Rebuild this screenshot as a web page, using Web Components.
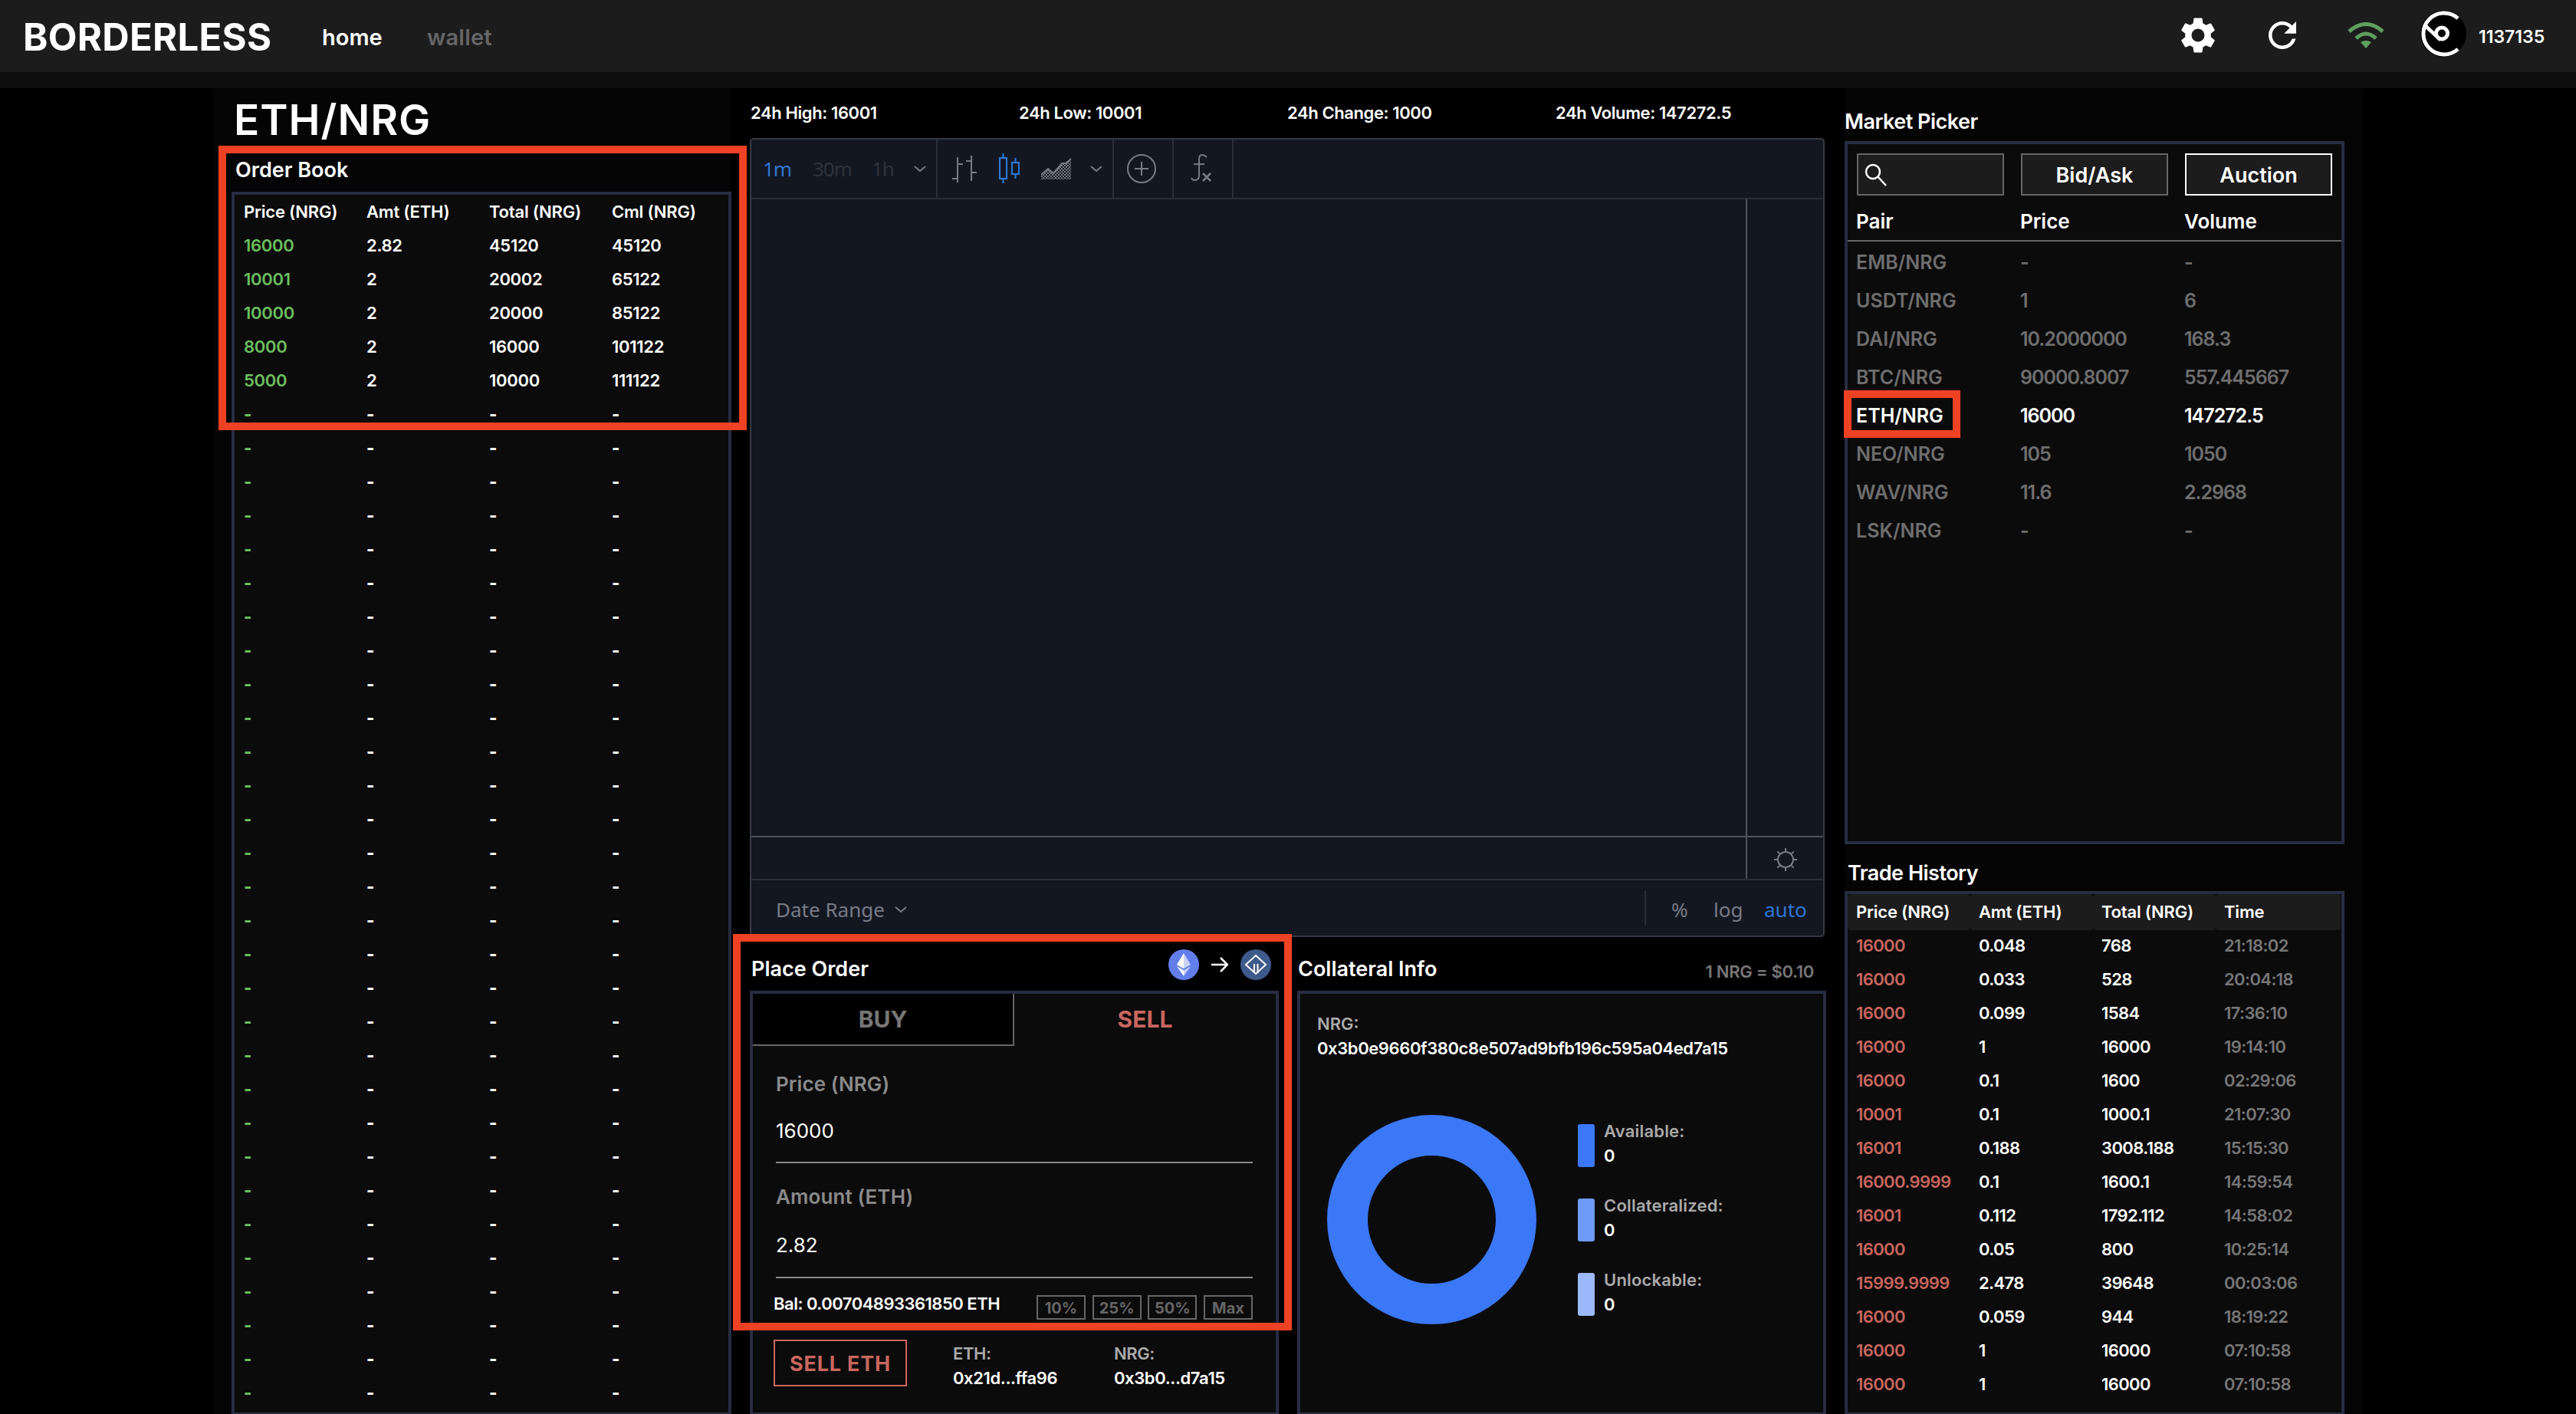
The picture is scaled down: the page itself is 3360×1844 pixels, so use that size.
<!DOCTYPE html>
<html><head><meta charset="utf-8"><title>Borderless</title>
<style>
html,body{margin:0;padding:0;background:#000;height:1844px;overflow:hidden;font-family:Inter,"Liberation Sans",sans-serif;color:#fff}
</style></head><body>
<bl-app>
  <bl-header slot="header"></bl-header>
  <bl-col slot="left">
    <bl-pair>ETH/NRG</bl-pair>
    <bl-title style="height:46px;margin-bottom:7px;padding-left:5px">Order Book</bl-title>
    <bl-panel style="flex:1"><bl-order-book></bl-order-book></bl-panel>
  </bl-col>
  <bl-col slot="center">
    <bl-stats></bl-stats>
    <bl-chart></bl-chart>
    <bl-lower>
      <bl-col>
        <bl-title style="height:60px;margin-top:10px;padding-left:2px;padding-right:10px">Place Order<bl-swap slot="aside"></bl-swap></bl-title>
        <bl-panel style="flex:1"><bl-place-order></bl-place-order></bl-panel>
      </bl-col>
      <bl-col>
        <bl-title style="height:60px;margin-top:10px;padding-left:1px;padding-right:16px">Collateral Info<bl-note slot="aside">1 NRG = $0.10</bl-note></bl-title>
        <bl-panel style="flex:1"><bl-collateral></bl-collateral></bl-panel>
      </bl-col>
    </bl-lower>
  </bl-col>
  <bl-col slot="right">
    <bl-title style="height:54px;margin-top:15px;letter-spacing:-.5px">Market Picker</bl-title>
    <bl-panel style="height:917px"><bl-market-picker></bl-market-picker></bl-panel>
    <bl-title style="height:50px;margin-top:11px;padding-left:4px;letter-spacing:-.5px">Trade History</bl-title>
    <bl-panel style="flex:1"><bl-trade-history></bl-trade-history></bl-panel>
  </bl-col>
  <bl-annotation x="285" y="190" w="689" h="371"></bl-annotation>
  <bl-annotation x="956" y="1218" w="729" h="517"></bl-annotation>
  <bl-annotation x="2405" y="509" w="152" h="62"></bl-annotation>
</bl-app>
<script>
const el=(name,html)=>customElements.define(name,class extends HTMLElement{
  constructor(){super();this.attachShadow({mode:'open'}).innerHTML=typeof html==='function'?html(this):html;}
});
const chev=(c='#787b86')=>`<svg width="16" height="8" viewBox="0 0 16 8" fill="none"><path d="M1 1l7 6 7-6" stroke="${c}" stroke-width="2"/></svg>`;

el('bl-app',`<style>
:host{display:block;position:relative;width:3360px;height:1844px;overflow:hidden}
.strip{height:21px;background:#0e0e0e}
main{display:grid;grid-template-columns:652px 1404px 652px;column-gap:24px;width:2804px;height:1731px;margin-left:278px;padding-left:24px;box-sizing:border-box;background:#040404}
.c{background:#000;margin:0 -24px;padding:0 24px;display:flex}
.l,.r{display:flex}
::slotted(bl-col){flex:1}
</style><slot name="header"></slot><div class="strip"></div>
<main><div class="l"><slot name="left"></slot></div><div class="c"><slot name="center"></slot></div><div class="r"><slot name="right"></slot></div></main><slot></slot>`);

el('bl-col',`<style>:host{display:flex;flex-direction:column;min-width:0}</style><slot></slot>`);
el('bl-lower',`<style>:host{display:grid;grid-template-columns:690px 690px;column-gap:24px;flex:1;min-height:0}</style><slot></slot>`);

el('bl-header',`<style>
:host{display:flex;align-items:center;height:94px;background:#1c1c1c;padding-left:30px;box-sizing:border-box}
.logo{width:390px;font-size:49px;font-weight:700;letter-spacing:.300px;margin-top:2px}
.nav{font-size:29px;font-weight:600;margin-top:2px}
.home{width:137px}.wallet{color:#666;letter-spacing:.2px}
.right{margin-left:auto;display:flex;align-items:center}
svg{display:block}
.num{width:127px;margin-left:16px;font-size:23px;font-weight:600;margin-top:2px}
</style>
<div class="logo">BORDERLESS</div><div class="nav home">home</div><div class="nav wallet">wallet</div>
<div class="right">
<svg width="56" height="56" viewBox="0 0 24 24" fill="#fff" style="margin-top:-3px"><path d="M19.14 12.94c.04-.3.06-.61.06-.94 0-.32-.02-.64-.07-.94l2.03-1.58c.18-.14.23-.41.12-.61l-1.92-3.32c-.12-.22-.37-.29-.59-.22l-2.39.96c-.5-.38-1.03-.7-1.62-.94l-.36-2.54c-.04-.24-.24-.41-.48-.41h-3.84c-.24 0-.43.17-.47.41l-.36 2.54c-.59.24-1.13.57-1.62.94l-2.39-.96c-.22-.08-.47 0-.59.22L2.74 8.87c-.12.21-.08.47.12.61l2.03 1.58c-.05.3-.09.63-.09.94s.02.64.07.94l-2.03 1.58c-.18.14-.23.41-.12.61l1.92 3.32c.12.22.37.29.59.22l2.39-.96c.5.38 1.03.7 1.62.94l.36 2.54c.05.24.24.41.48.41h3.84c.24 0 .44-.17.47-.41l.36-2.54c.59-.24 1.13-.56 1.62-.94l2.39.96c.22.08.47 0 .59-.22l1.92-3.32c.12-.22.07-.47-.12-.61l-2.01-1.58zM12 15.6c-1.98 0-3.6-1.62-3.6-3.6s1.62-3.6 3.6-3.6 3.6 1.62 3.6 3.6-1.62 3.6-3.6 3.6z"/></svg>
<svg width="54" height="54" viewBox="0 0 24 24" fill="#fff" style="margin-left:55px;margin-top:-2px"><path d="M17.65 6.35C16.2 4.9 14.21 4 12 4c-4.42 0-7.99 3.58-7.99 8s3.57 8 7.99 8c3.73 0 6.84-2.55 7.73-6h-2.08c-.82 2.33-3.04 4-5.65 4-3.31 0-6-2.69-6-6s2.69-6 6-6c1.66 0 3.14.69 4.22 1.78L13 11h7V4l-2.35 2.35z"/></svg>
<svg width="48" height="34" viewBox="0 0 48 34" fill="none" stroke="#5f9f5f" stroke-width="5" style="margin-left:58px;margin-top:-2px"><path d="M2 12Q24-7 46 12"/><path d="M11 21Q24 9 37 21"/><path d="M24 34l-7-8Q24 22 31 26z" fill="#5f9f5f" stroke="none"/></svg>
<svg width="60" height="60" viewBox="0 0 60 60" fill="none" stroke="#fff" style="margin-left:47px;margin-top:-6px"><circle cx="30" cy="30" r="30" fill="#000" stroke="none"/><path d="M49 10A27 27 0 1 0 49 50" stroke-width="5"/><circle cx="28" cy="29.500" r="7.500" stroke-width="5"/><path d="M7 20L26 38" stroke-width="4.500"/></svg>
<div class="num">1137135</div>
</div>`);

el('bl-pair',`<style>:host{display:block;height:82px;line-height:82px;font-size:55px;font-weight:600;letter-spacing:1px;padding-left:3px}</style><slot></slot>`);
el('bl-title',`<style>:host{display:flex;align-items:center;justify-content:space-between;font-size:27px;font-weight:600;flex:none}span{padding-top:3px}</style><span><slot></slot></span><slot name="aside"></slot>`);
el('bl-note',`<style>:host{display:block;font-size:22px;font-weight:600;color:#777;margin-top:10px;letter-spacing:-.3px}</style><slot></slot>`);
el('bl-swap',`<style>:host{display:flex;align-items:center;gap:16px;margin-top:-8px}svg{display:block}</style>
<svg width="40" height="40" viewBox="0 0 40 40"><circle cx="20" cy="20" r="20" fill="#627eea"/><path d="M20 5l-9 15 9 5.300z" fill="#fff"/><path d="M20 5l9 15-9 5.300z" fill="#c9d3f7"/><path d="M11 22l9 13V27.500z" fill="#fff"/><path d="M29 22l-9 13V27.500z" fill="#c9d3f7"/></svg>
<svg width="22" height="22" viewBox="0 0 22 22" fill="none" stroke="#fff" stroke-width="2.500"><path d="M0 11h20M12 2l9 9-9 9"/></svg>
<svg width="40" height="40" viewBox="0 0 40 40" fill="none" stroke="#fff" stroke-width="2"><circle cx="20" cy="20" r="20" fill="#3d5a8a" stroke="none"/><path d="M20 8l13 12-13 12L7 20z"/><path d="M18 19v12M22.500 19v12"/></svg>`);
el('bl-panel',`<style>:host{display:block;box-sizing:border-box;border:4px solid #272c42;background:#0b0b0b;overflow:hidden;min-height:0}</style><slot></slot>`);
el('bl-annotation',h=>`<style>:host{position:absolute;box-sizing:border-box;border:10px solid #ef4123;left:${h.getAttribute('x')}px;top:${h.getAttribute('y')}px;width:${h.getAttribute('w')}px;height:${h.getAttribute('h')}px}</style>`);

const obRows=[['16000','2.82','45120','45120'],['10001','2','20002','65122'],['10000','2','20000','85122'],['8000','2','16000','101122'],['5000','2','10000','111122']];
while(obRows.length<35)obRows.push(['-','-','-','-']);
const cell=(v,c='')=>`<span class="${c}${v==='-'?' dash':''}">${v}</span>`;
el('bl-order-book',`<style>
:host{display:block;padding-left:12px;font-size:22px;font-weight:600;letter-spacing:-.3px}
.row{display:grid;grid-template-columns:160px 160px 160px 1fr;height:44px;line-height:44px}
.h{letter-spacing:-.2px}
.g{color:#6cbf5f}
.dash{font-weight:800}
</style><div class="row h"><span>Price (NRG)</span><span>Amt (ETH)</span><span>Total (NRG)</span><span>Cml (NRG)</span></div>
${obRows.map(r=>`<div class="row">${cell(r[0],'g')}${cell(r[1])}${cell(r[2])}${cell(r[3])}</div>`).join('')}`);

el('bl-stats',`<style>:host{display:grid;grid-template-columns:repeat(4,350px);height:65px;line-height:64px;font-size:22px;font-weight:600;letter-spacing:-.4px;padding-left:1px;flex:none}</style>
<span>24h High: 16001</span><span>24h Low: 10001</span><span>24h Change: 1000</span><span>24h Volume: 147272.5</span>`);

el('bl-chart',`<style>
:host{display:flex;flex-direction:column;flex:none;box-sizing:border-box;width:1402px;height:1042px;background:#131722;border:2px solid #363a45;border-radius:5px;font-family:"Noto Sans",sans-serif;color:#787b86;overflow:hidden}
svg{display:block}
.tb{display:flex;height:78px;box-sizing:border-box;border-bottom:2px solid #2a2e39;flex:none}
.g{display:flex;align-items:center;box-sizing:border-box;border-right:2px solid #2a2e39;flex:none}
.tf{width:243px;padding-left:15px;font-size:26px;letter-spacing:-1px;color:#2f323b}
.tf span{flex:none}
.kinds{width:230px;padding-left:17px}
.one{width:78px;justify-content:center;padding-right:4px}
.plot{flex:1;display:grid;grid-template-columns:1299px 1fr;min-height:0}
.plot div:first-child,.time div:first-child{border-right:2px solid #50535e}
.time{display:grid;grid-template-columns:1299px 1fr;height:56px;box-sizing:border-box;border-top:2px solid #50535e;flex:none}
.time div:last-child{display:flex;align-items:center;justify-content:center;padding-top:4px}
.bar{height:74px;box-sizing:border-box;border-top:2px solid #2a2e39;display:flex;align-items:center;padding-left:32px;font-size:26px;flex:none}
.bar span{padding-top:3px}
.right{margin-left:auto;display:flex;align-items:center;width:233px}
.sep{width:2px;height:44px;background:#2a2e39;margin-right:33px}
</style>
<div class="tb">
 <div class="g tf"><span style="width:65px;color:#2e76d0">1m</span><span style="width:77px">30m</span><span style="width:55px">1h</span>${chev()}</div>
 <div class="g kinds">
  <svg width="36" height="40" viewBox="0 0 36 40" fill="none" stroke="#787b86" stroke-width="2"><path d="M9 5v33M2 33h7M9 14h7M27 3v33M20 10h7M27 25h7"/></svg>
  <svg width="28" height="42" viewBox="0 0 28 42" fill="none" stroke="#2e76d0" stroke-width="2.200" style="margin-left:26px"><rect x="2" y="7" width="9" height="27"/><path d="M6.500 1v6M6.500 34v6"/><rect x="18" y="13" width="9" height="15"/><path d="M22.500 7v6M22.500 28v6"/></svg>
  <svg width="40" height="30" viewBox="0 0 40 30" fill="none" style="margin-left:28px"><defs><pattern id="ck" width="4" height="4" patternUnits="userSpaceOnUse"><rect width="2" height="2" fill="#787b86"/><rect x="2" y="2" width="2" height="2" fill="#787b86"/></pattern></defs><path d="M0 23L9 15 16 21 27 8H32L39 2V29H0z" fill="url(#ck)"/><path d="M0 23L9 15 16 21 27 8H32L39 2" stroke="#787b86" stroke-width="2"/></svg>
  <span style="margin-left:24px">${chev()}</span>
 </div>
 <div class="g one"><svg width="40" height="40" viewBox="0 0 40 40" fill="none" stroke="#787b86" stroke-width="2"><circle cx="20" cy="20" r="18"/><path d="M20 11v18M11 20h18"/></svg></div>
 <div class="g one"><svg width="36" height="40" viewBox="0 0 36 40" fill="none" stroke="#787b86" stroke-width="2"><path d="M25 5Q22 2 19 2 15 2 15 8V29Q15 35 9 35 6 35 5 32M8 14H22"/><path d="M20 26L30 36M30 26L20 36" stroke-width="2.500"/></svg></div>
</div>
<div class="plot"><div></div><div></div></div>
<div class="time"><div></div><div><svg width="32" height="32" viewBox="0 0 32 32" fill="none" stroke="#787b86" stroke-width="2"><circle cx="16" cy="16" r="10"/><path d="M16 1v5M16 26v5M1 16h5M26 16h5M5.400 5.400l3.500 3.500M23.100 23.100l3.500 3.500M5.400 26.600l3.500-3.500M23.100 8.900l3.500-3.500"/></svg></div></div>
<div class="bar"><span>Date Range</span><span style="margin-left:13px">${chev()}</span>
 <div class="right"><div class="sep"></div><span style="width:55px">%</span><span style="width:66px">log</span><span style="color:#2e76d0">auto</span></div></div>`);

el('bl-place-order',`<style>
:host{display:block;font-weight:600}
.tabs{display:grid;grid-template-columns:1fr 1fr;height:66px;font-size:30px;font-weight:700;text-align:center}
.buy{background:#000;color:#777;border-right:2px solid #666;border-bottom:2px solid #666;line-height:66px}
.sell{color:#c8665f;line-height:66px}
.form{padding:0 30px}
.lab{height:40px;line-height:43px;font-size:26px;color:#8a8a8a;letter-spacing:.1px}
.val{box-sizing:content-box;height:83px;line-height:86px;font-size:26px;font-weight:400;border-bottom:2px solid #8a8a8a}
.bal{display:flex;justify-content:space-between;align-items:flex-start;margin:22px 0 0 -3px;height:32px}
.bal b{font-weight:600;font-size:22px;line-height:23px;letter-spacing:-.5px}
.pcts{display:flex;gap:8.700px}
.pcts span{box-sizing:border-box;width:64px;height:32px;line-height:30px;border:2px solid #666;color:#666;font-size:20px;font-weight:700;text-align:center}
.act{display:flex;margin:26px 0 0 -3px}
.btn{box-sizing:border-box;width:174px;height:61px;line-height:60px;border:2px solid #c8665f;color:#c8665f;font-size:27px;font-weight:700;letter-spacing:.8px;text-align:center}
.ad{font-size:22px;line-height:32px;letter-spacing:-.4px;padding-top:2px}
.ad i{display:block;font-style:normal;color:#aaa}
</style>
<div class="tabs"><div class="buy">BUY</div><div class="sell">SELL</div></div>
<div class="form">
 <div class="lab" style="margin-top:30px">Price (NRG)</div><div class="val">16000</div>
 <div class="lab" style="margin-top:22px">Amount (ETH)</div><div class="val" style="height:86px;line-height:89px">2.82</div>
 <div class="bal"><b>Bal: 0.00704893361850 ETH</b><div class="pcts"><span>10%</span><span>25%</span><span>50%</span><span>Max</span></div></div>
 <div class="act"><div class="btn">SELL ETH</div><div class="ad" style="margin-left:60px;width:210px"><i>ETH:</i>0x21d...ffa96</div><div class="ad"><i>NRG:</i>0x3b0...d7a15</div></div>
</div>`);

el('bl-collateral',`<style>
:host{display:block;padding:22px 0 0 22px;font-weight:600;font-size:22px}
.l{height:32px;line-height:35px}
.m{color:#aaa}
.addr{letter-spacing:-.4px}
.body{display:flex;align-items:flex-start;margin:72px 0 0 13px}
.d{width:273px;height:273px;box-sizing:border-box;border:53px solid #3b78f7;border-radius:50%;flex:none}
.leg{margin:12px 0 0 54px}
.it{display:flex;height:56px;margin-bottom:41px}
.sw{width:22px;height:56px;border-radius:3px;margin-right:12px}
.tx{margin-top:-8px;letter-spacing:.2px}
</style>
<div class="l m">NRG:</div><div class="l addr">0x3b0e9660f380c8e507ad9bfb196c595a04ed7a15</div>
<div class="body"><div class="d"></div><div class="leg">
 <div class="it"><div class="sw" style="background:#3b78f7"></div><div class="tx"><div class="l m">Available:</div><div class="l">0</div></div></div>
 <div class="it"><div class="sw" style="background:#6e9bfa"></div><div class="tx"><div class="l m">Collateralized:</div><div class="l">0</div></div></div>
 <div class="it"><div class="sw" style="background:#9db9fb"></div><div class="tx"><div class="l m">Unlockable:</div><div class="l">0</div></div></div>
</div></div>`);

const mk=[['EMB/NRG','-','-'],['USDT/NRG','1','6'],['DAI/NRG','10.2000000','168.3'],['BTC/NRG','90000.8007','557.445667'],['ETH/NRG','16000','147272.5'],['NEO/NRG','105','1050'],['WAV/NRG','11.6','2.2968'],['LSK/NRG','-','-']];
el('bl-market-picker',`<style>
:host{display:block;font-weight:600}
.top{display:grid;grid-template-columns:repeat(3,192px);column-gap:22px;padding:12px 0 0 12px}
.b{box-sizing:border-box;height:55px;line-height:54px;border:2px solid #666;background:#1c1c1c;text-align:center;font-size:27px}
.b.on{border-color:#fff}
.s{display:flex;align-items:center;padding-left:8px}
.row{display:grid;grid-template-columns:214px 214px 1fr;padding-left:11px;font-size:25px;height:50px;line-height:50px;color:#6e6e6e}
.row span+span{letter-spacing:-1px}
.row.on{color:#fff}
.h{color:#fff;font-size:26px;height:48px;line-height:48px;margin:10px 0 2px;border-bottom:2px solid #666}
.h span+span{letter-spacing:0}
</style>
<div class="top"><div class="b s"><svg width="30" height="30" viewBox="0 0 30 30" fill="none" stroke="#fff" stroke-width="2.500"><circle cx="11" cy="11" r="9"/><path d="M17 17L28 29"/></svg></div><div class="b">Bid/Ask</div><div class="b on">Auction</div></div>
<div class="row h"><span>Pair</span><span>Price</span><span>Volume</span></div>
${mk.map((r,i)=>`<div class="row${i==4?' on':''}"><span>${r[0]}</span><span>${r[1]}</span><span>${r[2]}</span></div>`).join('')}`);

const th=[['16000','0.048','768','21:18:02'],['16000','0.033','528','20:04:18'],['16000','0.099','1584','17:36:10'],['16000','1','16000','19:14:10'],['16000','0.1','1600','02:29:06'],['10001','0.1','1000.1','21:07:30'],['16001','0.188','3008.188','15:15:30'],['16000.9999','0.1','1600.1','14:59:54'],['16001','0.112','1792.112','14:58:02'],['16000','0.05','800','10:25:14'],['15999.9999','2.478','39648','00:03:06'],['16000','0.059','944','18:19:22'],['16000','1','16000','07:10:58'],['16000','1','16000','07:10:58']];
el('bl-trade-history',`<style>
:host{display:block;font-size:22px;font-weight:600;letter-spacing:-.6px}
.row{display:grid;grid-template-columns:160px 160px 160px 163px;height:44px;line-height:47px}
.row span{padding-left:11px}
.h span{background:#1c1c1c;border-radius:4px;letter-spacing:-.2px}
.r{color:#c8665f}.t{color:#777}
</style><div class="row h"><span>Price (NRG)</span><span>Amt (ETH)</span><span>Total (NRG)</span><span>Time</span></div>
${th.map(r=>`<div class="row"><span class="r">${r[0]}</span><span>${r[1]}</span><span>${r[2]}</span><span class="t">${r[3]}</span></div>`).join('')}`);
</script>
</body></html>
